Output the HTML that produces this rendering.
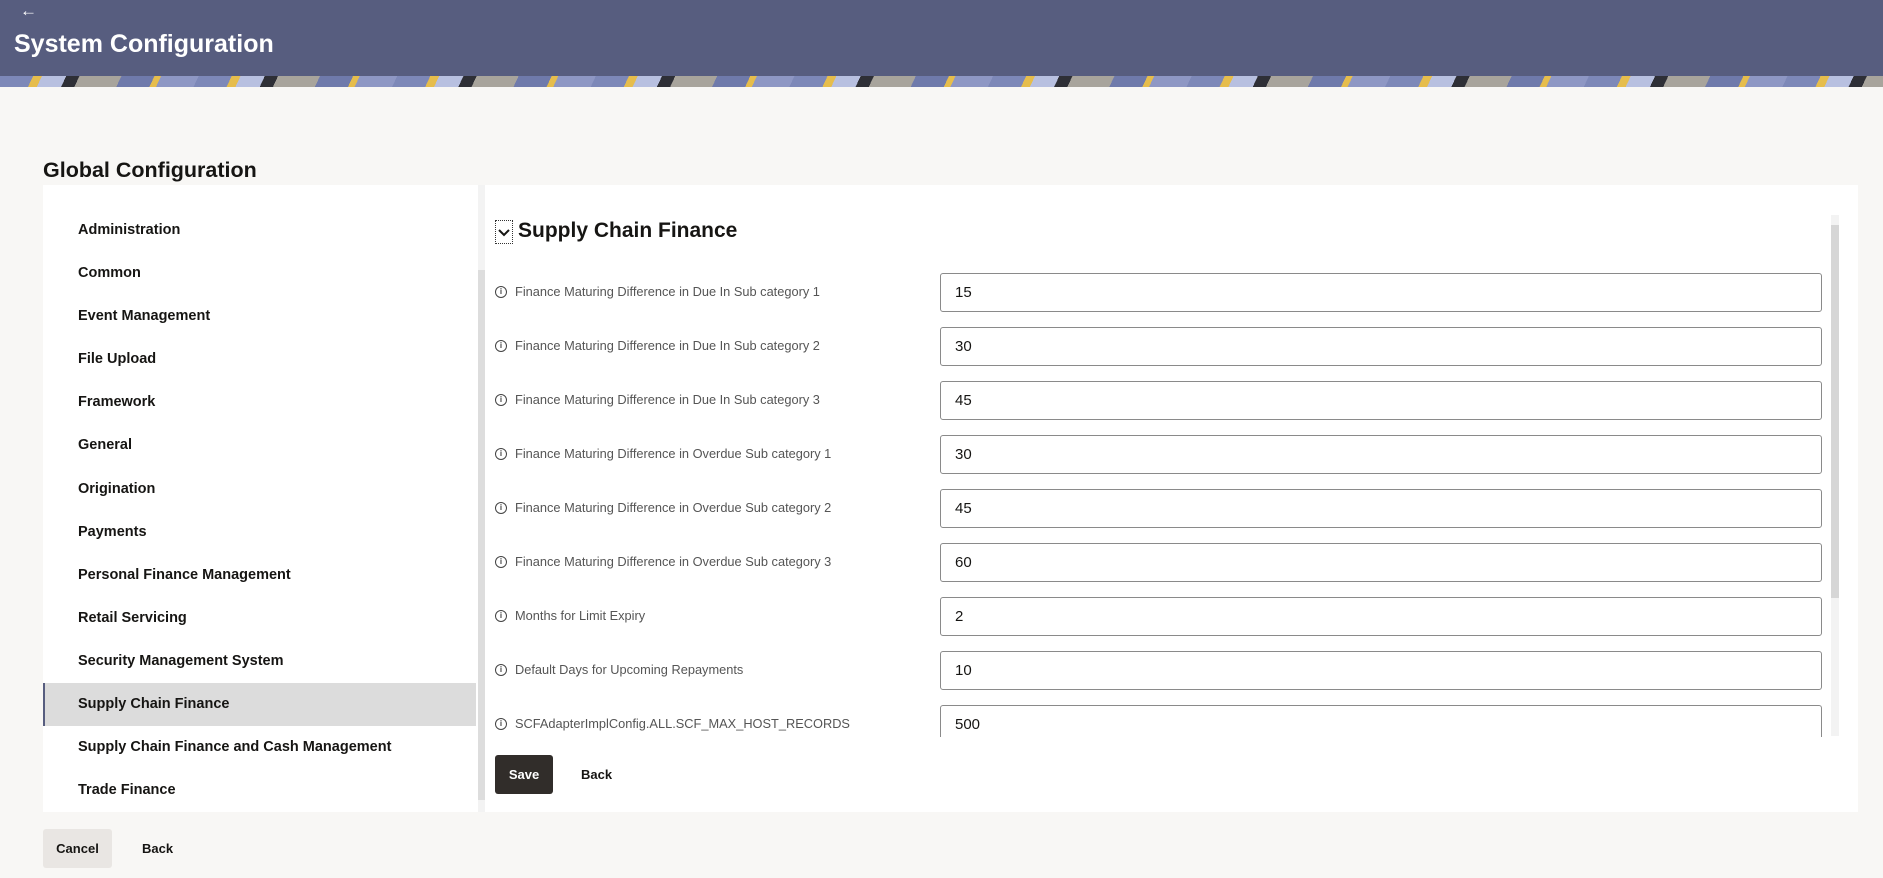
<!DOCTYPE html>
<html><head><meta charset="utf-8"><style>
*{box-sizing:border-box;margin:0;padding:0}
body{width:1883px;height:878px;overflow:hidden;background:#f8f7f5;font-family:"Liberation Sans",sans-serif;color:#161513;position:relative}
.hdr{position:absolute;left:0;top:0;width:1883px;height:76px;background:#575d7f}
.strip{position:absolute;left:0;top:76px;width:1883px;height:11px;background:repeating-linear-gradient(115deg,#7d88b8 0 30px,#e6bd4c 30px 38px,#b8c0e0 38px 60px,#2e2f36 60px 72px,#a8a49c 72px 110px,#6f7aab 110px 140px,#e6bd4c 140px 146px,#8e97c4 146px 180px)}
.arrow{position:absolute;left:20px;top:1px;color:#fff;font-size:17px;font-weight:bold}
.title{position:absolute;left:14px;top:30px;color:#fff;font-size:25px;font-weight:bold}
.gc{position:absolute;left:43px;top:158px;font-size:21.5px;font-weight:bold}
.panel{position:absolute;left:43px;top:185px;width:1815px;height:627px;background:#fff}
.nav{position:absolute;left:0;top:24px;width:433px}
.nav div{height:43.1px;line-height:43px;padding-left:35px;font-size:14.5px;font-weight:bold;color:#161513}
.nav div.sel{background:#dcdcdc;border-left:2px solid #575d7f;padding-left:33px}
.lsb{position:absolute;left:435px;top:85px;width:7px;height:530px;background:#ddd}
.lsbt{position:absolute;left:435px;top:0;width:7px;height:627px;background:#f3f3f3}
.sec{position:absolute;left:518px;top:219px;font-size:21px;font-weight:bold}
.chev{position:absolute;left:495px;top:220px;width:18px;height:24px;border:1px dotted #333}
.row{position:absolute;left:495px;font-size:12.8px;color:#555;display:flex;align-items:center}
.row i{display:inline-block;width:12px;height:12px;border:1.5px solid #444;border-radius:50%;font-style:normal;font-size:8px;line-height:9px;text-align:center;color:#444;font-weight:bold;margin-right:8px}
.inp{position:absolute;left:940px;width:882px;height:39px;border:1px solid #8a8a8a;border-radius:3px;font-size:15px;line-height:37px;padding-left:14px;color:#161513}
.rsb{position:absolute;left:1831px;top:215px;width:8px;height:521px;background:#f3f3f3}
.rsbt{position:absolute;left:1831px;top:225px;width:8px;height:373px;background:#d6d6d6}
.save{position:absolute;left:495px;top:755px;width:58px;height:39px;background:#312d2a;color:#fff;border-radius:3px;font-size:13px;font-weight:bold;line-height:39px;text-align:center}
.back1{position:absolute;left:581px;top:755px;line-height:39px;font-size:13px;font-weight:bold}
.cancel{position:absolute;left:43px;top:829px;width:69px;height:39px;background:#e9e6e3;border-radius:3px;font-size:13px;font-weight:bold;line-height:39px;text-align:center}
.back2{position:absolute;left:142px;top:829px;line-height:39px;font-size:13px;font-weight:bold}
</style></head><body>
<div class="hdr"></div><div class="strip"></div>
<div class="arrow">←</div>
<div class="title">System Configuration</div>
<div class="gc">Global Configuration</div>
<div class="panel">
<div class="nav">
<div>Administration</div><div>Common</div><div>Event Management</div><div>File Upload</div><div>Framework</div><div>General</div><div>Origination</div><div>Payments</div><div>Personal Finance Management</div><div>Retail Servicing</div><div>Security Management System</div><div class="sel">Supply Chain Finance</div><div>Supply Chain Finance and Cash Management</div><div>Trade Finance</div>
</div>
<div class="lsbt"></div><div class="lsb"></div>
</div>
<div class="chev"><svg width="16" height="22" viewBox="0 0 16 22"><path d="M3 9l5 5 5-5" fill="none" stroke="#161513" stroke-width="2"/></svg></div>
<div class="sec">Supply Chain Finance</div>
<div class="row" style="top:284px"><i>i</i>Finance Maturing Difference in Due In Sub category 1</div>
<div class="inp" style="top:273px">15</div>
<div class="row" style="top:338px"><i>i</i>Finance Maturing Difference in Due In Sub category 2</div>
<div class="inp" style="top:327px">30</div>
<div class="row" style="top:392px"><i>i</i>Finance Maturing Difference in Due In Sub category 3</div>
<div class="inp" style="top:381px">45</div>
<div class="row" style="top:446px"><i>i</i>Finance Maturing Difference in Overdue Sub category 1</div>
<div class="inp" style="top:435px">30</div>
<div class="row" style="top:500px"><i>i</i>Finance Maturing Difference in Overdue Sub category 2</div>
<div class="inp" style="top:489px">45</div>
<div class="row" style="top:554px"><i>i</i>Finance Maturing Difference in Overdue Sub category 3</div>
<div class="inp" style="top:543px">60</div>
<div class="row" style="top:608px"><i>i</i>Months for Limit Expiry</div>
<div class="inp" style="top:597px">2</div>
<div class="row" style="top:662px"><i>i</i>Default Days for Upcoming Repayments</div>
<div class="inp" style="top:651px">10</div>
<div class="row" style="top:716px"><i>i</i>SCFAdapterImplConfig.ALL.SCF_MAX_HOST_RECORDS</div>
<div class="inp" style="top:705px;height:32px;border-bottom:none;border-radius:3px 3px 0 0">500</div>
<div class="rsb"></div><div class="rsbt"></div>
<div class="save">Save</div><div class="back1">Back</div>
<div class="cancel">Cancel</div><div class="back2">Back</div>
</body></html>
